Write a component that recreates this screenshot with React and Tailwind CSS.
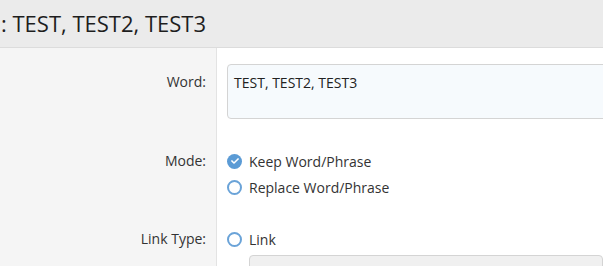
import { FaCheck } from "react-icons/fa";

const font = { fontFamily: '"Open Sans", "Noto Sans", sans-serif' };

const Radio = ({ checked, label }) => (
  <label className="flex h-5 items-center gap-[7px] text-[14px] text-[#333]">
    {checked ? (
      <span className="flex h-[15px] w-[15px] shrink-0 items-center justify-center rounded-full bg-[#5b9bd5]">
        <FaCheck className="h-[8px] w-[8px] text-white" />
      </span>
    ) : (
      <span className="h-[15px] w-[15px] shrink-0 rounded-full border-2 border-[#6aa3d8] bg-white" />
    )}
    <span>{label}</span>
  </label>
);

const Row = ({ label, labelPad, children, className = "" }) => (
  <div className="flex">
    <div
      className={`w-[217px] shrink-0 border-r border-[#e3e3e3] bg-[#f5f5f5] pr-[10px] text-right text-[14px] leading-5 text-[#333] ${labelPad}`}
    >
      {label}
    </div>
    <div className={`min-w-0 flex-1 pl-[10px] ${className}`}>{children}</div>
  </div>
);

export default function App() {
  return (
    <div className="h-[266px] w-[603px] overflow-hidden bg-white" style={font}>
      <div className="flex h-12 items-center border-b border-[#dcdcdc] bg-[#ebebeb] pl-[1px] text-[22px] text-[#1e1e1e]">
        : TEST, TEST2, TEST3
      </div>

      <Row label="Word:" labelPad="pt-[24px]" className="pt-4">
        <div className="-mr-4 h-[55px] rounded border border-[#d4d4d4] bg-[#f6fafd] px-[6px] pt-[8px] text-[14px] leading-5 text-[#222]">
          TEST, TEST2, TEST3
        </div>
      </Row>

      <Row label="Mode:" labelPad="pt-[32px]" className="flex flex-col gap-[6px] pt-[32px]">
        <Radio checked label="Keep Word/Phrase" />
        <Radio label="Replace Word/Phrase" />
      </Row>

      <Row label="Link Type:" labelPad="pt-[32px] h-[80px]" className="pt-[32px]">
        <Radio label="Link" />
        <div className="ml-[22px] mt-[6px] h-[40px] rounded border border-[#d4d4d4] bg-[#f0f0f0]" />
      </Row>
    </div>
  );
}
